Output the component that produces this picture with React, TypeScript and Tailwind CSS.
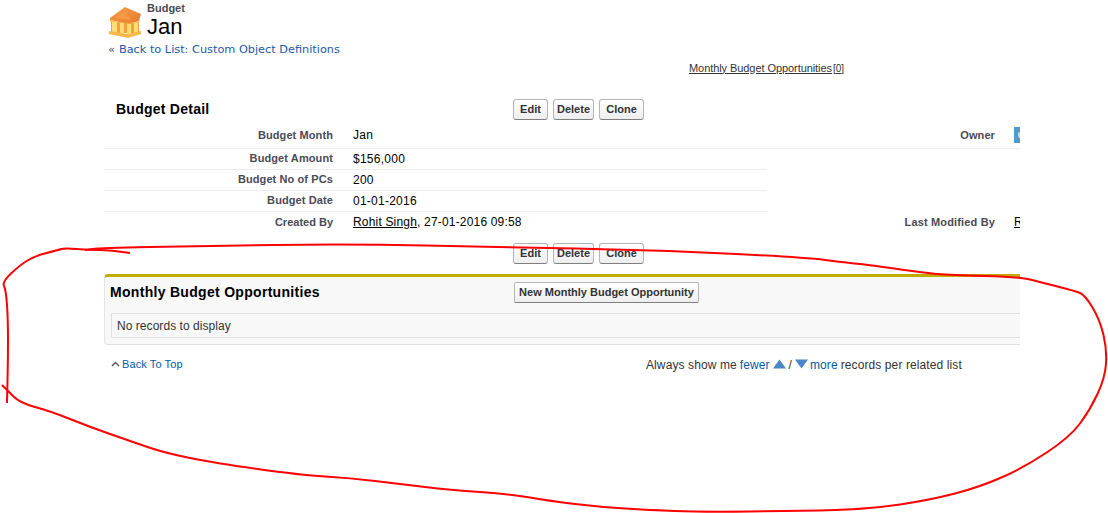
type Pt = [number, number];

// red hand drawn ring, traced from the picture
const TOP_STROKE: Pt[] = [
  [130, 253], [110, 250], [88, 250], [65, 248], [58, 250], [35, 256], [20, 265], [2, 282], [6, 290], [8, 320], [8, 360], [7, 403],
];
const RING: Pt[] = [
  [2, 385], [7, 390], [20, 403], [50, 411], [90, 427], [130, 441], [165, 453], [215, 463], [300, 475], [350, 478], [400, 484],
  [450, 490], [510, 494], [550, 501], [600, 507], [650, 510], [700, 512], [800, 511], [870, 509], [930, 500], [980, 487],
  [1025, 467], [1070, 437], [1090, 410], [1105, 378], [1107, 350], [1100, 320], [1085, 295], [1075, 291], [1040, 282],
  [1020, 277], [950, 275], [925, 273], [870, 265], [850, 263], [800, 257], [650, 250], [500, 247], [350, 244], [200, 246],
  [100, 248], [85, 250],
];

function smooth(points: Pt[]) {
  let d = `M${points[0][0]} ${points[0][1]}`;
  for (let i = 1; i < points.length - 1; i++) {
    const mx = (points[i][0] + points[i + 1][0]) / 2;
    const my = (points[i][1] + points[i + 1][1]) / 2;
    d += ` Q${points[i][0]} ${points[i][1]} ${mx} ${my}`;
  }
  const last = points[points.length - 1];
  return d + ` L${last[0]} ${last[1]}`;
}

function Btn({ children, className = "" }: { children: React.ReactNode; className?: string }) {
  return (
    <button className={`h-[21px] rounded-[3px] border border-[#b5b5b5] border-b-[#7f7f7f] bg-gradient-to-b from-white to-[#eeeeee] text-[11px] font-bold text-[#333] ${className}`}>
      {children}
    </button>
  );
}

function Row({ label, children }: { label: string; children: React.ReactNode }) {
  return (
    <div className="flex h-[21px] w-[663px] items-center border-b border-[#ececec] pb-[1px]">
      <div className="w-[229px] text-right text-[11px] font-bold tracking-[0.1px] text-[#4a4a56]">{label}</div>
      <div className="ml-5 text-[12px] tracking-[0.25px] text-black">{children}</div>
    </div>
  );
}

function BudgetIcon() {
  return (
    <svg width="34" height="32" viewBox="0 0 34 32" className="shrink-0">
      <defs>
        <linearGradient id="roof" x1="0" y1="0" x2="1" y2="1">
          <stop offset="0" stopColor="#f7a04c" />
          <stop offset="1" stopColor="#e8792c" />
        </linearGradient>
      </defs>
      <path d="M2 11 L17 0 L33 7 L31 14 L20 17 L2 13 Z" fill="url(#roof)" />
      <path d="M7 11 L17 4 L23 13 Z" fill="#f49a45" />
      <path d="M2 13 L20 17 L31 14 L31 16 L20 19 L2 15 Z" fill="#fbc35a" />
      <path d="M3 15 L31 16 V26 H3 Z" fill="#f2a338" />
      <path d="M4 15 H9 V25 H4 Z M12 16 H16 V26 H12 Z M19 17 H23 V27 H19 Z M26 16 H30 V26 H26 Z" fill="#fddc78" />
      <path d="M1 24 L20 27 L33 24 L33 27 L20 31 L1 27 Z" fill="#f9b84a" />
    </svg>
  );
}

export default function App() {
  return (
    <div className="relative h-[513px] w-[1108px] overflow-hidden bg-white font-['Liberation_Sans',Arial,sans-serif]">
      <div className="ml-[104px] w-[916px] overflow-hidden">
        <div className="flex h-[41px] items-start pl-1 pt-[7px]">
          <BudgetIcon />
          <div className="-mt-[5px] ml-[5px] flex flex-col">
            <span className="text-[11px] leading-[13px] font-bold text-[#4a4a56]">Budget</span>
            <span className="text-[22px] leading-[24px] text-black">Jan</span>
          </div>
        </div>
        <div className="flex h-[16px] items-center pt-[2px] pl-[4px] font-['DejaVu_Sans',Verdana,sans-serif] text-[11.3px] text-[#1a5aa8]">
          <span className="mr-[4px] text-[#4a4a56]">«</span>
          <span>Back to List: Custom Object Definitions</span>
        </div>
        <div className="flex h-[22px] items-center pl-[585px] text-[11px] tracking-[-0.07px] text-[#333]">
          <span className="underline">Monthly Budget Opportunities</span>
          <span className="ml-[1px] text-[10px] underline">[0]</span>
        </div>
        <div className="flex h-[43px] items-center pt-[17px] pl-3">
          <div className="w-[397px] text-[14px] font-bold tracking-[0.25px] text-black">Budget Detail</div>
          <div className="flex gap-[5px]">
            <Btn className="w-[35px]">Edit</Btn>
            <Btn className="w-[41px]">Delete</Btn>
            <Btn className="w-[45px]">Clone</Btn>
          </div>
        </div>
        <div>
          <div className="flex h-[27px] items-center border-b border-[#ececec]">
            <div className="w-[229px] text-right text-[11px] font-bold tracking-[0.1px] text-[#4a4a56]">Budget Month</div>
            <div className="ml-5 text-[12px] tracking-[0.25px] text-black">Jan</div>
            <div className="ml-auto flex items-center">
              <span className="text-[11px] font-bold tracking-[0.1px] text-[#4a4a56]">Owner</span>
              <span className="ml-[19px] flex h-4 w-[6px] items-center justify-end bg-[#4f9bd0]">
                <span className="h-[6px] w-[2px] rounded-l-full bg-[#bcdcf0]" />
              </span>
            </div>
          </div>
          <Row label="Budget Amount">$156,000</Row>
          <Row label="Budget No of PCs">200</Row>
          <Row label="Budget Date">01-01-2016</Row>
          <div className="flex h-[21px] items-center pb-[1px]">
            <div className="w-[229px] text-right text-[11px] font-bold text-[#4a4a56]">Created By</div>
            <div className="ml-5 text-[12px] tracking-[0.18px] text-black">
              <span className="underline">Rohit Singh</span>, 27-01-2016 09:58
            </div>
            <div className="ml-auto flex items-center">
              <span className="text-[11px] font-bold tracking-[0.15px] text-[#4a4a56]">Last Modified By</span>
              <span className="ml-[19px] w-[6px] overflow-hidden text-[12px] text-black underline">R</span>
            </div>
          </div>
        </div>
        <div className="flex h-[41px] items-start pt-[10px] pl-[409px]">
          <div className="flex gap-[5px]">
            <Btn className="w-[35px]">Edit</Btn>
            <Btn className="w-[41px]">Delete</Btn>
            <Btn className="w-[45px]">Clone</Btn>
          </div>
        </div>
        <div className="h-[71px] rounded-l-[4px] border-t-[3px] border-b border-l border-t-[#c1ac00] border-b-[#dfdfdf] border-l-[#e5e5e5] bg-[#f8f8f8]">
          <div className="flex h-[36px] items-center pb-[6px] pl-[5px]">
            <div className="w-[404px] text-[14px] font-bold tracking-[0.3px] text-black">Monthly Budget Opportunities</div>
            <Btn className="h-[18px] w-[185px] !rounded-[2px] leading-none">New Monthly Budget Opportunity</Btn>
          </div>
          <div className="ml-1.5 flex h-[25px] items-center border-y border-l border-[#e0e0e0] pl-[5px] text-[12px] tracking-[0.05px] text-[#333]">
            No records to display
          </div>
        </div>
        <div className="flex h-[38px] items-center pl-[7px] text-[11px]">
          <svg width="9" height="6" viewBox="0 0 9 6" className="mr-[2px]">
            <path d="M1 5 L4.5 1.5 L8 5" fill="none" stroke="#555" strokeWidth="1.4" />
          </svg>
          <span className="w-[524px] tracking-[0.1px] text-[#015ba7]">Back To Top</span>
          <span className="pt-[1px] text-[12px] tracking-[0.1px] text-[#333]">Always show me</span>
          <span className="ml-[3px] pt-[1px] text-[12px] tracking-[0.1px] text-[#015ba7]">fewer</span>
          <svg width="13" height="10" viewBox="0 0 13 10" className="ml-[3px]">
            <path d="M6.5 0.5 L13 9.5 H0 Z" fill="#4a86c8" />
          </svg>
          <span className="mx-[3px] pt-[1px] text-[12px] text-[#333]">/</span>
          <svg width="13" height="10" viewBox="0 0 13 10">
            <path d="M0 0.5 H13 L6.5 9.5 Z" fill="#4a86c8" />
          </svg>
          <span className="ml-[2px] pt-[1px] text-[12px] tracking-[0.1px] text-[#015ba7]">more</span>
          <span className="ml-[3px] pt-[1px] text-[12px] tracking-[0.1px] text-[#333]">records per related list</span>
        </div>
      </div>
      <svg width="1108" height="513" viewBox="0 0 1108 513" className="pointer-events-none absolute top-0 left-0">
        <path d={smooth(TOP_STROKE)} fill="none" stroke="#ff0000" strokeWidth="2" />
        <path d={smooth(RING)} fill="none" stroke="#ff0000" strokeWidth="2" />
      </svg>
    </div>
  );
}
